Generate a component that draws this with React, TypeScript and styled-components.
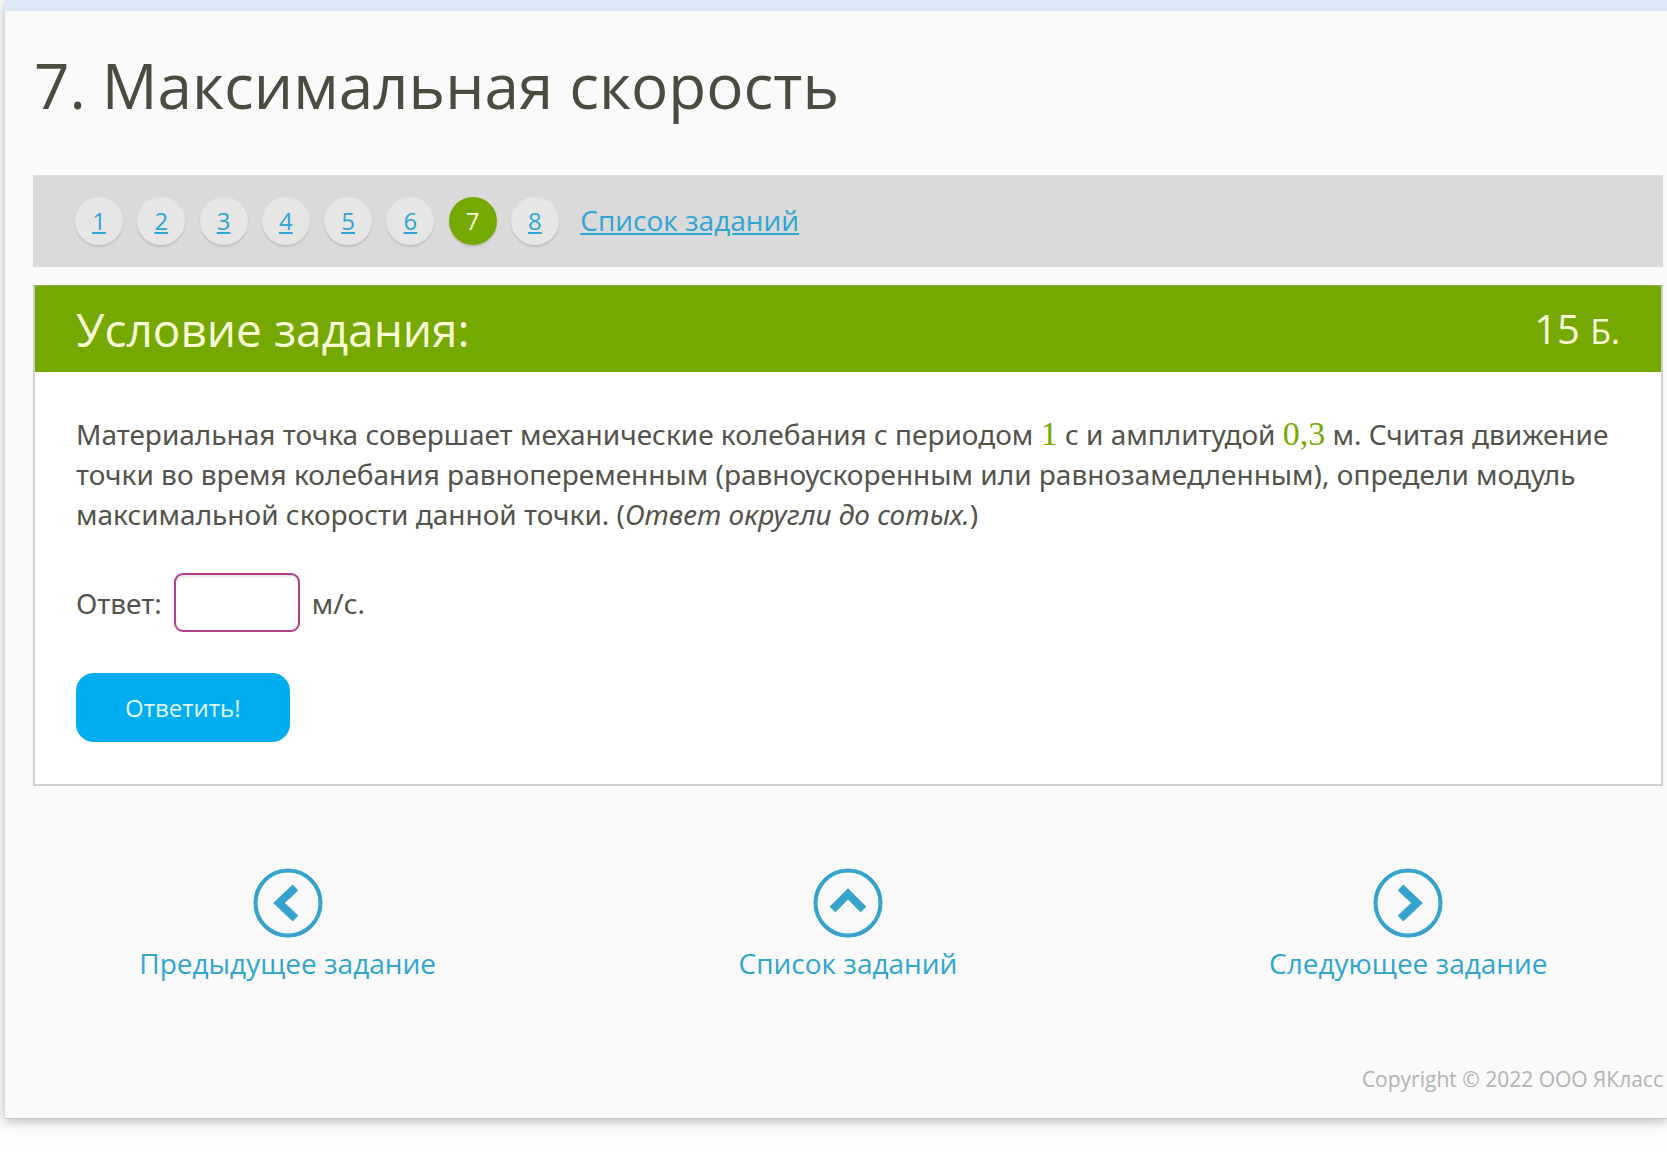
import React from 'react';
import styled, { createGlobalStyle, css } from 'styled-components';

const GlobalStyle = createGlobalStyle`
  * { box-sizing: border-box; }
  body {
    margin: 0;
    background: #fefefe;
    color: #53534c;
    font: 28px/40px "Open Sans", "Noto Sans", sans-serif;
    overflow-x: hidden;
  }
`;

const Sheet = styled.div`
  margin: 0 0 32px 5px;
  padding: 0 4px 0 28px;
  background: #fafafa;
  border-top: 11px solid #dbeaf6;
  box-shadow: 0 1px 0 #c6c7c9, 0 3px 12px rgba(60, 65, 75, 0.4);
`;

const Title = styled.h1`
  margin: 0;
  padding: 32px 1px 48px;
  font-size: 62px;
  line-height: 84px;
  font-weight: 400;
  color: #4b4b3f;
`;

const Pager = styled.nav`
  padding: 22px 42px;
  background: #dadada;
  line-height: 48px;
`;

const pill = css`
  display: inline-block;
  width: 48px;
  height: 48px;
  margin-right: 7px;
  border-radius: 50%;
  font-size: 24px;
  text-align: center;
  vertical-align: top;
  box-shadow: 0 2px 2px rgba(0, 0, 0, 0.12);
`;

const PageLink = styled.a`
  ${pill}
  background: #e6e6e6;
  color: #2fa5d3;
`;

const CurrentPage = styled.span`
  ${pill}
  background: #75a800;
  color: #f8ffe4;
`;

const ListLink = styled.a`
  display: inline-block;
  margin-left: 7px;
  vertical-align: top;
  line-height: 46px;
  color: #2fa5d3;
`;

const Panel = styled.section`
  margin-top: 18px;
  background: #fff;
  border: 2px solid #cfd1d1;
  border-top: 1px solid #8ba84b;
`;

const PanelHeader = styled.header`
  display: flex;
  align-items: center;
  justify-content: space-between;
  padding: 11px 41px;
  background: #75a800;
  color: #f8ffd8;
  line-height: 64px;
`;

const PanelTitle = styled.h2`
  margin: 0;
  font-size: 46px;
  line-height: 62px;
  font-weight: 400;
`;

const Points = styled.span`
  font-size: 40px;
  small {
    font-size: 34px;
    line-height: 1;
  }
`;

const PanelBody = styled.form`
  padding: 42px 40px 42px 41px;
  font-family: "Noto Sans", "Open Sans", sans-serif;
  font-size: 28px;
`;

const Statement = styled.p`
  margin: 0;
`;

const Value = styled.span`
  font-family: "Liberation Serif", "Times New Roman", serif;
  font-size: 34px;
  line-height: 1;
  color: #75a800;
`;

const AnswerRow = styled.div`
  display: flex;
  align-items: center;
  gap: 12px;
  margin: 39px 0 41px;
`;

const AnswerInput = styled.input`
  width: 126px;
  height: 59px;
  padding: 0 12px;
  border: 2px solid #b23f8c;
  border-radius: 9px;
  background: #fff;
  box-shadow: inset 0 2px 3px rgba(0, 0, 0, 0.1);
  color: inherit;
  font: inherit;
  outline: none;
`;

const SubmitButton = styled.button`
  display: block;
  height: 69px;
  padding: 0 49px;
  border: 0;
  border-radius: 18px;
  background: #00adef;
  color: #e0fbff;
  font: 24px/40px "Open Sans", "Noto Sans", sans-serif;
  cursor: pointer;
`;

const TaskNav = styled.nav`
  display: grid;
  grid-template-columns: 5fr 6fr 5fr;
  justify-items: center;
  padding: 82px 0 80px;
`;

const TaskLink = styled.a`
  display: flex;
  flex-direction: column;
  align-items: center;
  gap: 5px;
  color: #2fa5cf;
  text-decoration: none;
`;

const Footer = styled.footer`
  padding-bottom: 23px;
  font-size: 21px;
  line-height: 32px;
  text-align: right;
  color: #b2b2b2;
`;

const chevrons = {
  left: '42.5,19.5 26,35 42.5,50.5',
  up: '19.5,41.5 35,26 50.5,41.5',
  right: '27.5,19.5 44,35 27.5,50.5',
};

function CircleArrow({ direction }: { direction: keyof typeof chevrons }) {
  return (
    <svg width="70" height="70" viewBox="0 0 70 70" fill="none" stroke="#36a3cd" aria-hidden="true">
      <circle cx="35" cy="35" r="32.5" strokeWidth="4" />
      <polyline points={chevrons[direction]} strokeWidth="8" />
    </svg>
  );
}

const tasks = [1, 2, 3, 4, 5, 6, 7, 8];
const current = 7;

export default function App() {
  return (
    <>
      <GlobalStyle />
      <Sheet>
        <Title>7. Максимальная скорость</Title>
        <Pager aria-label="Задания">
          {tasks.map((n) => (
            <React.Fragment key={n}>
              {n === current ? (
                <CurrentPage aria-current="page">{n}</CurrentPage>
              ) : (
                <PageLink href={`#task-${n}`}>{n}</PageLink>
              )}{' '}
            </React.Fragment>
          ))}
          <ListLink href="#list">Список заданий</ListLink>
        </Pager>
        <Panel>
          <PanelHeader>
            <PanelTitle>Условие задания:</PanelTitle>
            <Points>15 <small>Б.</small></Points>
          </PanelHeader>
          <PanelBody onSubmit={(e) => e.preventDefault()}>
            <Statement>
              Материальная точка совершает механические колебания с периодом <Value>1</Value> с и
              амплитудой <Value>0,3</Value> м. Считая движение точки во время колебания
              равнопеременным (равноускоренным или равнозамедленным), определи модуль максимальной
              скорости данной точки. (<em>Ответ округли до сотых.</em>)
            </Statement>
            <AnswerRow>
              <label htmlFor="answer">Ответ:</label>
              <AnswerInput id="answer" type="text" autoComplete="off" />
              <span>м/с.</span>
            </AnswerRow>
            <SubmitButton type="submit">Ответить!</SubmitButton>
          </PanelBody>
        </Panel>
        <TaskNav aria-label="Переход между заданиями">
          <TaskLink href="#task-6">
            <CircleArrow direction="left" />
            Предыдущее задание
          </TaskLink>
          <TaskLink href="#list">
            <CircleArrow direction="up" />
            Список заданий
          </TaskLink>
          <TaskLink href="#task-8">
            <CircleArrow direction="right" />
            Следующее задание
          </TaskLink>
        </TaskNav>
        <Footer>Copyright © 2022 ООО ЯКласс</Footer>
      </Sheet>
    </>
  );
}
